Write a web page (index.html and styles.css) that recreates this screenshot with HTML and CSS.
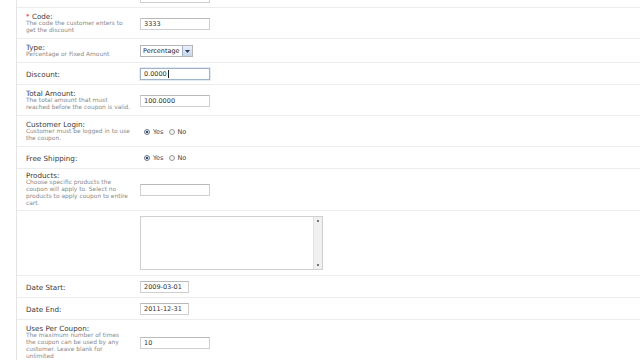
FILE: index.html
```html
<!DOCTYPE html>
<html lang="en">
<head>
    <meta charset="UTF-8">
    <meta name="viewport" content="width=device-width, initial-scale=1.0">
    <title>Coupon</title>
    <link rel="stylesheet" href="styles.css">
</head>
<body>

    <div class="page">
        <div class="form">

            <!-- row scrolled out of view at the top -->
            <div class="row">
                <div class="label"></div>
                <div class="field"><span class="input"></span></div>
            </div>

            <div class="row">
                <div class="label"><span class="req">*</span> Code:<span class="help">The code the customer enters to<br>get the discount</span></div>
                <div class="field"><span class="input">3333</span></div>
            </div>

            <div class="row">
                <div class="label">Type:<span class="help">Percentage or Fixed Amount</span></div>
                <div class="field">
                    <span class="select">
                        <span class="select-value">Percentage</span>
                        <span class="select-btn">
                            <svg width="5" height="3" viewBox="0 0 5 3"><path d="M0 0h5L2.5 3z" fill="#2b3a55"/></svg>
                        </span>
                    </span>
                </div>
            </div>

            <div class="row">
                <div class="label">Discount:</div>
                <div class="field"><span class="input focus">0.0000<span class="caret"></span></span></div>
            </div>

            <div class="row">
                <div class="label">Total Amount:<span class="help">The total amount that must<br>reached before the coupon is valid.</span></div>
                <div class="field"><span class="input">100.0000</span></div>
            </div>

            <div class="row">
                <div class="label">Customer Login:<span class="help">Customer must be logged in to use<br>the coupon.</span></div>
                <div class="field">
                    <span class="radio checked"></span><span class="opt">Yes</span>
                    <span class="radio"></span><span class="opt">No</span>
                </div>
            </div>

            <div class="row">
                <div class="label">Free Shipping:</div>
                <div class="field">
                    <span class="radio checked"></span><span class="opt">Yes</span>
                    <span class="radio"></span><span class="opt">No</span>
                </div>
            </div>

            <div class="row row-tight">
                <div class="label">Products:<span class="help">Choose specific products the<br>coupon will apply to. Select no<br>products to apply coupon to entire<br>cart.</span></div>
                <div class="field"><span class="input"></span></div>
            </div>

            <div class="row row-area">
                <div class="label"></div>
                <div class="field">
                    <div class="textarea">
                        <div class="scrollbar">
                            <span class="arrow"></span>
                            <span class="arrow"></span>
                        </div>
                    </div>
                </div>
            </div>

            <div class="row">
                <div class="label">Date Start:</div>
                <div class="field"><span class="input date">2009-03-01</span></div>
            </div>

            <div class="row">
                <div class="label">Date End:</div>
                <div class="field"><span class="input date">2011-12-31</span></div>
            </div>

            <div class="row">
                <div class="label">Uses Per Coupon:<span class="help">The maximum number of times<br>the coupon can be used by any<br>customer. Leave blank for<br>unlimited</span></div>
                <div class="field"><span class="input">10</span></div>
            </div>

        </div>
    </div>

</body>
</html>
```

FILE: styles.css
```css
body {
    margin: 0;
    background: #fff;
    font-family: 'DejaVu Sans', Verdana, sans-serif;
    color: #3a3a3a;
    overflow: hidden;
}

.page {
    height: 360px;
    overflow: hidden;
}

.form {
    margin-top: -14px;
    margin-left: 16px;
    border-left: 1px solid #e4e4e4;
    min-height: 400px;
}

.row {
    display: grid;
    grid-template-columns: 114px 1fr;
    align-items: center;
    padding: 5px 0 4px 9px;
    border-bottom: 1px solid #ececec;
}

.row-tight {
    padding: 3px 0 3px 9px;
}

.row-area {
    padding: 5px 0 5px 9px;
}

.label {
    font-size: 7.2px;
    line-height: 7px;
    color: #3a3a3a;
    white-space: nowrap;
}

.req {
    color: #d33;
}

.help {
    display: block;
    font-size: 5.9px;
    line-height: 7px;
    color: #8a8a8a;
}

.field {
    display: flex;
    align-items: center;
    min-height: 12px;
    font-size: 7px;
}

.input {
    box-sizing: border-box;
    display: flex;
    align-items: center;
    width: 70px;
    height: 12px;
    padding: 0 3px;
    border: 1px solid #cfcfcf;
    border-top-color: #b9b9b9;
    background: #fff;
    font-size: 6.5px;
    color: #333;
}

.input.date {
    width: 49px;
}

.input.focus {
    border-color: #9fb3c9;
    box-shadow: 0 0 0 1px #e3ebf4;
}

.caret {
    width: 1px;
    height: 8px;
    margin-left: 1px;
    background: #222;
}

.select {
    display: flex;
    box-sizing: border-box;
    width: 53px;
    height: 12px;
    border: 1px solid #b5b5b5;
    background: #fff;
}

.select-value {
    flex: 1;
    padding-left: 2px;
    font-size: 6.5px;
    line-height: 10px;
    color: #222;
}

.select-btn {
    display: flex;
    align-items: center;
    justify-content: center;
    width: 9px;
    border-left: 1px solid #9fb0c8;
    background: linear-gradient(#e9f0fa, #c7d6ea);
}

.radio {
    box-sizing: border-box;
    width: 6px;
    height: 6px;
    margin-left: 4px;
    border: 1px solid #9a9a9a;
    border-radius: 50%;
    background: #f4f4f4;
}

.radio.checked {
    border-color: #6d7b8d;
    background: radial-gradient(circle, #3c4d63 40%, #dfe5ee 55%);
}

.opt {
    margin-left: 3px;
    margin-right: 1px;
    font-size: 6.5px;
    color: #444;
}

.textarea {
    box-sizing: border-box;
    display: flex;
    justify-content: flex-end;
    width: 183px;
    height: 54px;
    border: 1px solid #cfcfcf;
    background: #fff;
}

.scrollbar {
    display: flex;
    flex-direction: column;
    justify-content: space-between;
    align-items: center;
    width: 8px;
    padding: 3px 0;
    background: #f0f0f0;
    border-left: 1px solid #e2e2e2;
}

.arrow {
    width: 2px;
    height: 2px;
    background: #777;
}
```
